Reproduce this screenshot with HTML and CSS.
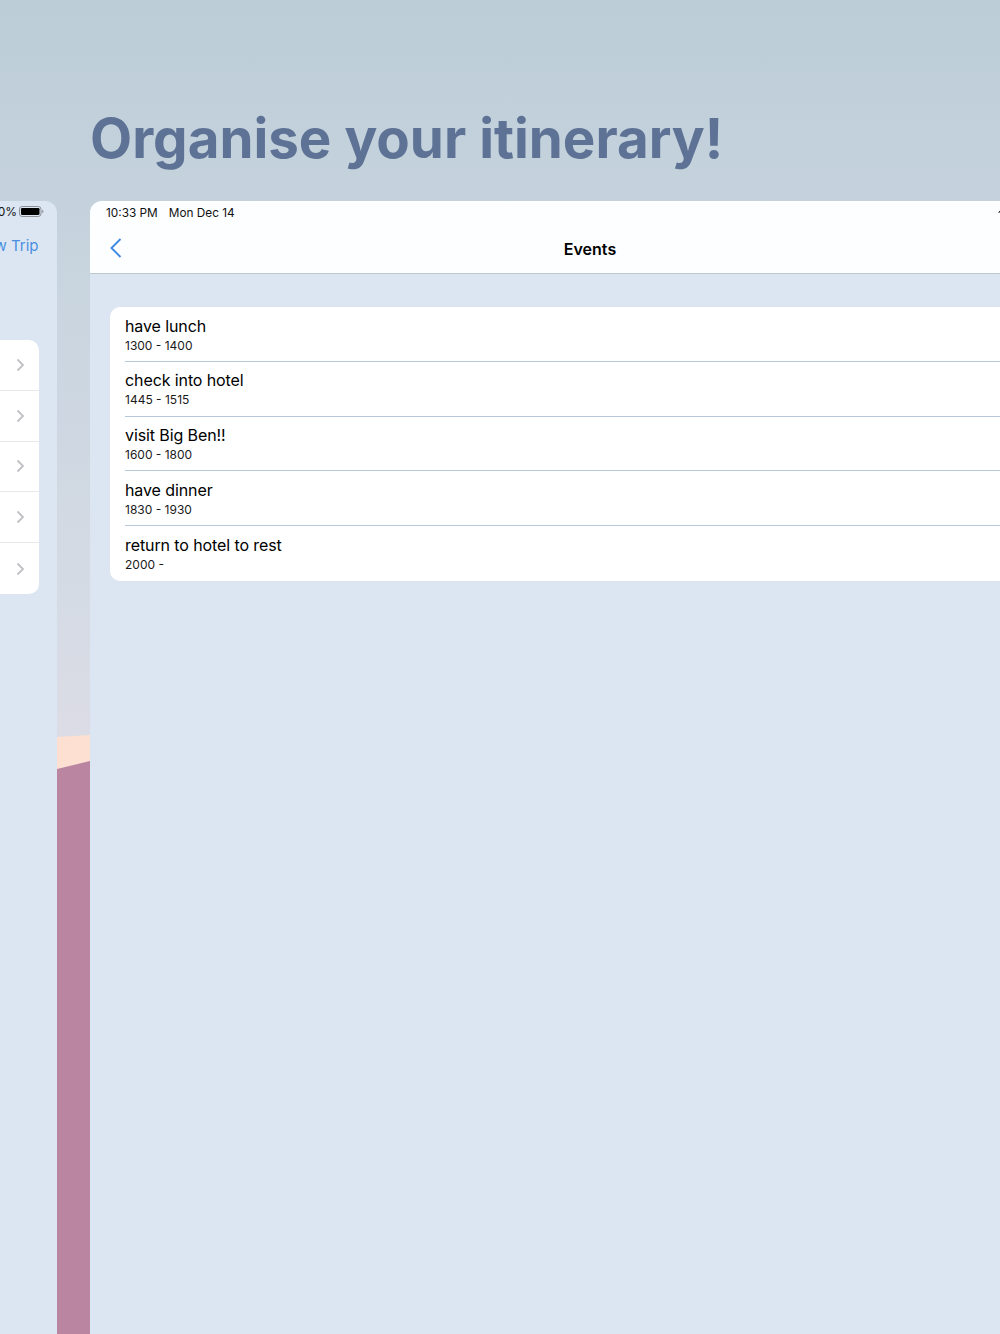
FILE: index.html
```html
<!DOCTYPE html>
<html lang="en">
<head>
<meta charset="utf-8">
<title>Organise your itinerary!</title>
<link rel="stylesheet" href="styles.css">
</head>
<body>
<div class="screen">
  <svg class="hills" width="1000" height="1334" viewBox="0 0 1000 1334" aria-hidden="true">
    <polygon points="57,737 90,735 90,1334 57,1334" fill="#fde0d1"/>
    <polygon points="57,769 90,761 90,1334 57,1334" fill="#b985a1"/>
  </svg>
  <h1 class="headline">Organise your itinerary!</h1>
  <div class="panes">
    <aside class="side">
      <div class="side-status">
        <span class="pct">0%</span>
        <svg class="battery" width="25" height="11" viewBox="0 0 25 11" aria-hidden="true">
          <rect x="0.5" y="0.5" width="21.5" height="10" rx="2.6" fill="none" stroke="#8d9097"/>
          <rect x="2" y="2" width="18.5" height="7" rx="1.3" fill="#000"/>
          <path d="M23.2 3.8c.8.3 1.2.9 1.2 1.7s-.4 1.4-1.2 1.7z" fill="#8d9097"/>
        </svg>
      </div>
      <div class="side-nav">w Trip</div>
      <div class="side-list">
        <div class="side-row"><svg class="chev" width="9" height="14" viewBox="0 0 9 14"><path d="M1.5 1.5 7 7l-5.500 5.500" fill="none" stroke="#c0c1c5" stroke-width="1.800"/></svg></div>
        <div class="side-row"><svg class="chev" width="9" height="14" viewBox="0 0 9 14"><path d="M1.5 1.5 7 7l-5.500 5.500" fill="none" stroke="#c0c1c5" stroke-width="1.800"/></svg></div>
        <div class="side-row"><svg class="chev" width="9" height="14" viewBox="0 0 9 14"><path d="M1.5 1.5 7 7l-5.500 5.500" fill="none" stroke="#c0c1c5" stroke-width="1.800"/></svg></div>
        <div class="side-row"><svg class="chev" width="9" height="14" viewBox="0 0 9 14"><path d="M1.5 1.5 7 7l-5.500 5.500" fill="none" stroke="#c0c1c5" stroke-width="1.800"/></svg></div>
        <div class="side-row"><svg class="chev" width="9" height="14" viewBox="0 0 9 14"><path d="M1.5 1.5 7 7l-5.500 5.500" fill="none" stroke="#c0c1c5" stroke-width="1.800"/></svg></div>
      </div>
    </aside>
    <main class="main">
      <header class="topbar">
        <div class="status">
          <span>10:33 PM</span><span>Mon Dec 14</span>
          <svg class="wifi" width="4" height="4" viewBox="0 0 4 4" aria-hidden="true"><path d="M0 3.500 3 1h1v2.500z" fill="#000"/></svg>
        </div>
        <div class="navbar">
          <svg class="back" width="12" height="20" viewBox="0 0 12 20" aria-hidden="true"><path d="M10.500 1 1.500 10l9 9" fill="none" stroke="#3f8ae0" stroke-width="1.900"/></svg>
          <div class="nav-title">Events</div>
        </div>
      </header>
      <section class="events">
        <div class="event"><div class="event-name">have lunch</div><div class="event-time">1300 - 1400</div></div>
        <div class="event"><div class="event-name">check into hotel</div><div class="event-time">1445 - 1515</div></div>
        <div class="event"><div class="event-name">visit Big Ben!!</div><div class="event-time">1600 - 1800</div></div>
        <div class="event"><div class="event-name">have dinner</div><div class="event-time">1830 - 1930</div></div>
        <div class="event"><div class="event-name">return to hotel to rest</div><div class="event-time">2000 -</div></div>
      </section>
    </main>
  </div>
</div>
</body>
</html>
```
FILE: styles.css
```css
* { box-sizing: border-box; }
html, body { margin: 0; padding: 0; }
body {
  width: 1000px;
  height: 1334px;
  overflow: hidden;
  font-family: Inter, "Liberation Sans", sans-serif;
  color: #000;
}
.screen {
  position: relative;
  width: 1000px;
  height: 1334px;
  overflow: hidden;
  display: flex;
  flex-direction: column;
  background: linear-gradient(180deg, #bccdd8 0%, #c8d4de 20%, #d5dbe5 45%, #dcdce5 56%, #dcdce5 100%);
}
.hills { position: absolute; left: 0; top: 0; }
.headline {
  position: relative;
  margin: 0;
  height: 201px;
  padding: 104px 0 0 90px;
  font-size: 54.700px;
  line-height: 68px;
  font-weight: 700;
  color: #5d7295;
  white-space: nowrap;
}
.panes {
  position: relative;
  flex: 1;
  display: flex;
  gap: 33px;
}
.side {
  width: 57px;
  flex: none;
  background: #dce6f2;
  border-top-right-radius: 12px;
  overflow: hidden;
  display: flex;
  flex-direction: column;
  align-items: flex-end;
}
.side-status {
  height: 21px;
  display: flex;
  align-items: center;
  gap: 2px;
  padding-right: 13px;
  font-size: 12px;
  white-space: nowrap;
}
.pct { color: #111; }
.battery { flex: none; }
.side-nav {
  height: 48.500px;
  padding: 14px 18.500px 0 0;
  font-size: 15px;
  line-height: 20px;
  color: #4a90e2;
  white-space: nowrap;
}
.side-list {
  margin-top: 69.500px;
  margin-right: 18px;
  width: 60px;
  background: #fff;
  border-radius: 0 10px 10px 0;
}
.side-row {
  height: 50.800px;
  display: flex;
  align-items: center;
  justify-content: flex-end;
  padding-right: 14px;
  border-bottom: 1px solid #e6e8ec;
}
.side-row:last-child { border-bottom: 0; }
.main {
  flex: none;
  width: 1000px;
  background: #dce6f2;
  border-top-left-radius: 12px;
  overflow: hidden;
}
.topbar {
  height: 73px;
  background: #fcfeff;
  border-bottom: 1px solid #bfc8d0;
}
.status {
  height: 23px;
  display: flex;
  gap: 11px;
  align-items: center;
  padding-left: 16px;
  font-size: 11.800px;
  color: #111;
}
.wifi { margin-left: 752px; margin-top: -3px; }
.navbar {
  position: relative;
  height: 49px;
  display: flex;
  align-items: center;
  justify-content: center;
  padding-left: 20px;
  padding-right: 20px;
}
.back { position: absolute; left: 20px; top: 14px; }
.nav-title {
  font-size: 16px;
  font-weight: 600;
  line-height: 50px;
}
.events {
  margin: 33px 0 0 20px;
  background: #fff;
  border-radius: 10px 0 0 10px;
  padding-left: 15px;
}
.event {
  height: 54.800px;
  padding-top: 8.500px;
  border-bottom: 1px solid #b9c7da;
}
.event:last-child { border-bottom: 0; height: 54.500px; }
.event-name {
  font-size: 16px;
  letter-spacing: -0.100px;
  line-height: 21px;
}
.event-time {
  font-size: 12px;
  line-height: 17px;
  color: #1a1a1a;
}
```
